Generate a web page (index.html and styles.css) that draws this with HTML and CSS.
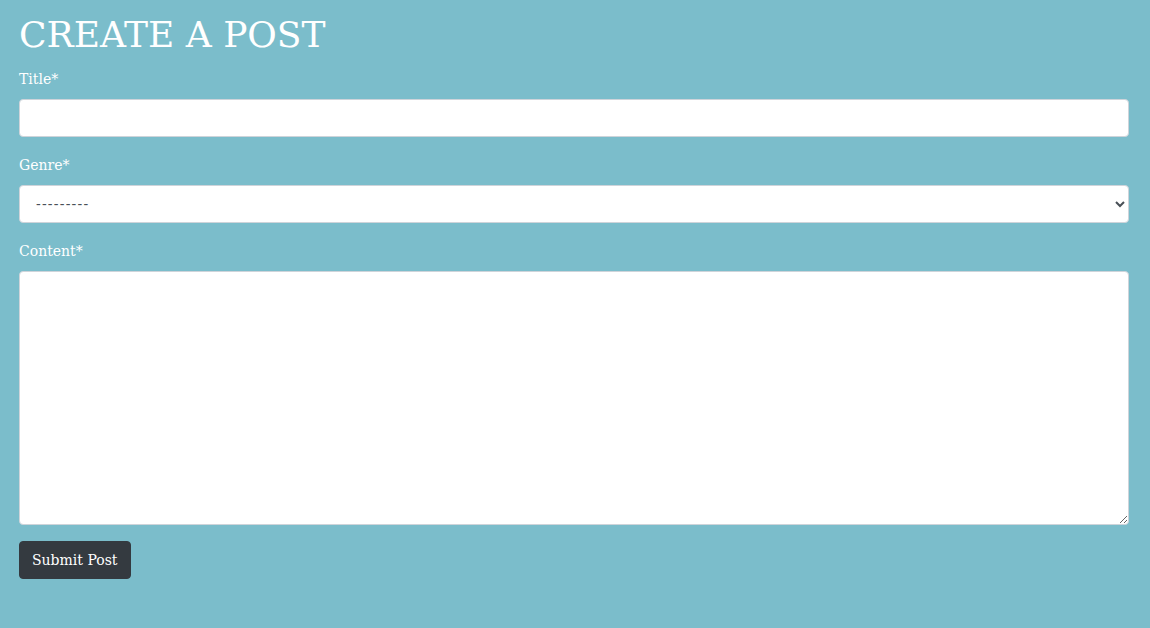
FILE: index.html
```html
<!DOCTYPE html>
<html lang="en">
<head>
<meta charset="utf-8">
<title>Create a Post</title>
<link rel="stylesheet" href="styles.css">
</head>
<body>
<main class="container">
  <h1 class="page-title">CREATE A POST</h1>
  <form class="post-form">
    <div class="form-group">
      <label class="form-label" for="title">Title*</label>
      <input class="form-control" id="title" type="text">
    </div>
    <div class="form-group">
      <label class="form-label" for="genre">Genre*</label>
      <select class="form-control form-select" id="genre">
        <option>---------</option>
      </select>
    </div>
    <div class="form-group">
      <label class="form-label" for="content">Content*</label>
      <textarea class="form-control form-textarea" id="content"></textarea>
    </div>
    <button class="btn-submit" type="button">Submit Post</button>
  </form>
</main>
</body>
</html>
```

FILE: styles.css
```css
html, body {
  margin: 0;
  padding: 0;
}
body {
  background: #7bbdcb;
  font-family: "DejaVu Serif", Georgia, serif;
  font-size: 14px;
  line-height: 24px;
  color: #ffffff;
  height: 628px;
}
.container {
  padding: 11px 21px 0 19px;
}
.page-title {
  margin: 0 0 8px 0;
  font-weight: 400;
  font-size: 36px;
  line-height: 48px;
  color: #ffffff;
}
.post-form {
  display: flex;
  flex-direction: column;
}
.form-group {
  display: flex;
  flex-direction: column;
  margin-bottom: 16px;
}
.form-label {
  margin-bottom: 8px;
  line-height: 24px;
}
.form-control {
  box-sizing: border-box;
  width: 100%;
  height: 38px;
  padding: 6px 12px;
  border: 1px solid #ced4da;
  border-radius: 4px;
  background: #ffffff;
  color: #495057;
  font-family: "DejaVu Serif", Georgia, serif;
  font-size: 14px;
  margin: 0;
}
.form-select {
  padding-left: 12px;
  letter-spacing: 1.2px;
}
.form-textarea {
  height: 254px;
  resize: vertical;
}
.btn-submit {
  align-self: flex-start;
  box-sizing: border-box;
  height: 38px;
  padding: 6px 12px;
  border: 1px solid #343a40;
  border-radius: 4px;
  background: #343a40;
  color: #ffffff;
  font-family: "DejaVu Serif", Georgia, serif;
  font-size: 14px;
  line-height: 24px;
  cursor: pointer;
}
```
